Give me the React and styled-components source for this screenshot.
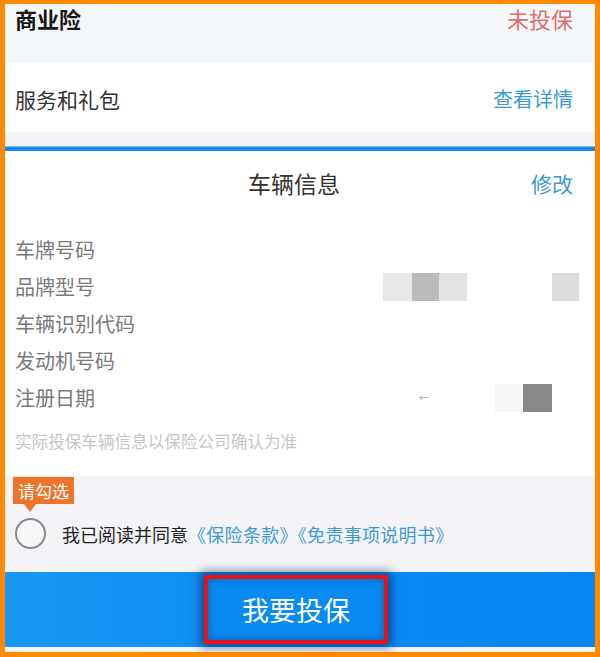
import React from 'react';
import styled, { createGlobalStyle } from 'styled-components';

const GlobalStyle = createGlobalStyle`
  body {
    margin: 0;
    font-family: "Noto Sans CJK SC", "Noto Sans", sans-serif;
  }
`;

const Frame = styled.div`
  width: 600px;
  height: 657px;
  box-sizing: border-box;
  border: 5px solid #ff8a00;
  border-top-width: 4px;
  background: #ffffff;
  display: flex;
  flex-direction: column;
  overflow: hidden;
`;

const Row = styled.div`
  height: ${props => props.height}px;
  background: ${props => props.bg || '#ffffff'};
  display: flex;
  justify-content: space-between;
  align-items: ${props => props.top ? 'flex-start' : 'center'};
  padding: ${props => props.top ? '0' : '2px'} 22px 0 10px;
  box-sizing: border-box;
  flex-shrink: 0;
`;

const RowTitle = styled.span`
  font-size: ${props => props.bold ? 22 : 21}px;
  font-weight: ${props => props.bold ? 700 : 400};
  line-height: 28px;
  color: ${props => props.bold ? '#161616' : '#333333'};
`;

const RowAction = styled.span`
  font-size: ${props => props.size || 20}px;
  line-height: 28px;
  color: ${props => props.color};
`;

const Gap = styled.div`
  height: 14px;
  background: #f3f3f7;
  flex-shrink: 0;
`;

const BlueLine = styled.div`
  height: 5px;
  background: #1a8ae2;
  border-top: 1px solid #6fb8ee;
  box-sizing: border-box;
  flex-shrink: 0;
`;

const Vehicle = styled.section`
  height: 325px;
  flex-shrink: 0;
  background: #ffffff;
  padding: 0 16px 0 10px;
  box-sizing: border-box;
`;

const VehicleHeader = styled.div`
  height: 64px;
  display: grid;
  grid-template-columns: 1fr auto 1fr;
  align-items: center;
  margin-right: 6px;
`;

const VehicleTitle = styled.h2`
  grid-column: 2;
  margin: 0;
  font-size: 23px;
  font-weight: 400;
  color: #333333;
`;

const EditLink = styled.span`
  grid-column: 3;
  justify-self: end;
  font-size: 21px;
  color: #3d9ad3;
`;

const InfoList = styled.div`
  padding-top: 16px;
`;

const InfoRow = styled.div`
  height: 37px;
  display: flex;
  align-items: center;
`;

const Label = styled.span`
  width: 350px;
  font-size: 20px;
  color: #7a7a7a;
`;

const Blur = styled.div`
  margin-left: auto;
  display: flex;
  align-items: center;
`;

const Pixel = styled.div`
  width: ${props => props.w}px;
  height: ${props => props.h || 28}px;
  background: ${props => props.c || 'transparent'};
`;

const Mark = styled.span`
  font-size: 10px;
  color: #b0b0b0;
`;

const Note = styled.p`
  margin: 13px 0 0;
  line-height: 24px;
  font-size: 16.6px;
  color: #c6c6c6;
`;

const Agree = styled.div`
  height: 96px;
  flex-shrink: 0;
  background: #f4f3f7;
  padding: 1px 0 0 8px;
  box-sizing: border-box;
`;

const Tip = styled.div`
  position: relative;
  display: inline-block;
  height: 27px;
  line-height: 27px;
  padding: 0 5px;
  background: #ef7328;
  color: #ffffff;
  font-size: 17px;

  &::after {
    content: '';
    position: absolute;
    left: 11px;
    bottom: -8px;
    border-left: 6px solid transparent;
    border-right: 6px solid transparent;
    border-top: 8px solid #ef7328;
  }
`;

const AgreeLine = styled.div`
  display: flex;
  align-items: center;
  margin-top: 14px;
  padding-left: 2px;
`;

const Radio = styled.span`
  width: 31px;
  height: 31px;
  box-sizing: border-box;
  border: 2px solid #8a8a8a;
  border-radius: 50%;
  background: #f6f6f8;
  flex-shrink: 0;
`;

const AgreeText = styled.span`
  margin-left: 16px;
  font-size: 18px;
  color: #222222;
`;

const Doc = styled.span`
  color: #3f9bd4;
  letter-spacing: 0.3px;
`;

const Bottom = styled.div`
  height: 75px;
  flex-shrink: 0;
  background: linear-gradient(90deg, #1998f4 0%, #0b8df5 45%, #0586f4 100%);
  display: flex;
  justify-content: center;
  align-items: center;
  padding-right: 8px;
  border-bottom: 5px solid #f3f6fa;
  box-sizing: content-box;
`;

const BuyButton = styled.button`
  width: 184px;
  height: 69px;
  border: 4px solid #e8111b;
  background: #0a8bf2;
  color: #ffffff;
  font-family: inherit;
  font-size: 27px;
  box-shadow: 0 0 10px 3px rgba(0, 25, 70, 0.6), inset 0 0 8px rgba(0, 40, 100, 0.45);
  cursor: pointer;
`;

const infoRows = [
  { label: '车牌号码' },
  {
    label: '品牌型号',
    pixels: [
      { w: 29, c: '#e8e8e8' },
      { w: 27, c: '#bbbbbb' },
      { w: 28, c: '#e2e2e2' },
      { w: 85 },
      { w: 27, c: '#dcdcdc' },
    ],
  },
  { label: '车辆识别代码' },
  { label: '发动机号码' },
  {
    label: '注册日期',
    mark: true,
    pixels: [
      { w: 66 },
      { w: 28, c: '#f6f6f6' },
      { w: 29, c: '#888888' },
      { w: 27 },
    ],
  },
];

const App = () => {
  return (
    <>
      <GlobalStyle />
      <Frame>
        <Row height={59} bg="#f5f8fb" top>
          <RowTitle bold>商业险</RowTitle>
          <RowAction size={22} color="#e06a6c">未投保</RowAction>
        </Row>
        <Row height={69}>
          <RowTitle>服务和礼包</RowTitle>
          <RowAction color="#3d9ad3">查看详情</RowAction>
        </Row>
        <Gap />
        <BlueLine />
        <Vehicle>
          <VehicleHeader>
            <VehicleTitle>车辆信息</VehicleTitle>
            <EditLink>修改</EditLink>
          </VehicleHeader>
          <InfoList>
            {infoRows.map(row => (
              <InfoRow key={row.label}>
                <Label>{row.label}</Label>
                {row.pixels && (
                  <Blur>
                    {row.mark && <Mark>←</Mark>}
                    {row.pixels.map((p, i) => (
                      <Pixel key={i} w={p.w} c={p.c} />
                    ))}
                  </Blur>
                )}
              </InfoRow>
            ))}
          </InfoList>
          <Note>实际投保车辆信息以保险公司确认为准</Note>
        </Vehicle>
        <Agree>
          <Tip>请勾选</Tip>
          <AgreeLine>
            <Radio />
            <AgreeText>
              我已阅读并同意<Doc>《保险条款》《免责事项说明书》</Doc>
            </AgreeText>
          </AgreeLine>
        </Agree>
        <Bottom>
          <BuyButton>我要投保</BuyButton>
        </Bottom>
      </Frame>
    </>
  );
};

export default App;
